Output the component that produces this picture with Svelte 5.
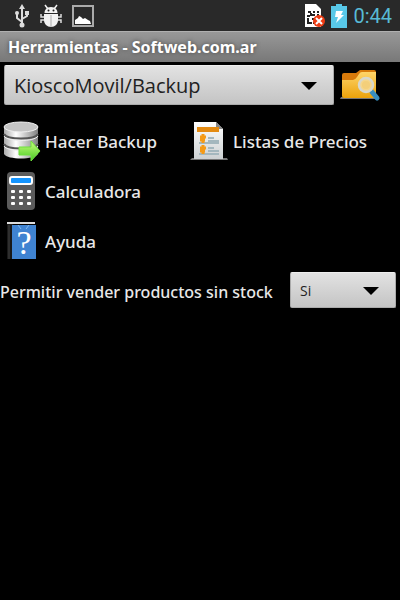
<script lang="ts">
  let folder = $state("KioscoMovil/Backup");
  let allowNoStock = $state("Si");
</script>

<svelte:head>
  <title>Herramientas - Softweb.com.ar</title>
</svelte:head>

<div class="screen">
  <div class="status-bar">
    <div class="status-group left">
      <svg width="16" height="24" viewBox="0 0 16 24" fill="none" stroke="#ddd" stroke-width="2">
        <path d="M8 4v17M8 18L3 14V9M8 15l5-3V9" />
        <path d="M8 0l3 5H5z" fill="#ddd" stroke="none" />
        <circle cx="8" cy="21" r="2.5" fill="#ddd" stroke="none" />
        <circle cx="3" cy="9" r="2" fill="#ddd" stroke="none" />
        <path d="M11 7h4v4h-4z" fill="#ddd" stroke="none" />
      </svg>
      <svg width="22" height="24" viewBox="0 0 22 24" fill="#f2f2f2">
        <path d="M5 1l3 4M17 1l-3 4" stroke="#f2f2f2" stroke-width="1.5" />
        <path d="M4.500 9c0-3 2-6 6.500-6s6.500 3 6.500 6z" />
        <path d="M4 10h14v6c0 4-3 7-7 7s-7-3-7-7z" />
        <path d="M4 13H1v-3M18 13h3v-3M4 16H1v3M18 16h3v3" fill="none" stroke="#ddd" stroke-width="1.5" />
        <path d="M11 11v12" stroke="#aaa" stroke-width="1" />
        <circle cx="8.500" cy="6.500" r="1" fill="#222" />
        <circle cx="13.500" cy="6.500" r="1" fill="#222" />
      </svg>
      <svg width="22" height="24" viewBox="0 0 22 24">
        <rect x="1" y="2" width="20" height="20" fill="#292929" stroke="#aaa" stroke-width="2" />
        <path d="M3 20v-4l3-2 1-2 2 1 2 2 2-1 3 2 2 1 1 3z" fill="#fff" />
      </svg>
    </div>
    <div class="status-group right">
      <svg width="20" height="24" viewBox="0 0 20 24">
        <path d="M0 0h11l5 5v18H0z" fill="#fff" />
        <path d="M3 8h3M8 8h2M12 8h2M2 12h3M7 11h3M12 11h2M6 9v3M3 14v5h4M7 15h2M8 19h2" fill="none" stroke="#222" stroke-width="2" />
        <circle cx="14" cy="17" r="6" fill="#ee3c13" />
        <path d="M11 14l6 6M17 14l-6 6" stroke="#fff" stroke-width="2" />
      </svg>
      <svg width="16" height="24" viewBox="0 0 16 24">
        <path d="M5 0h6v2h5v22H0V2h5z" fill="#58c8e8" />
        <path d="M5 7h7l-2 4h3L5 19l2-6H4z" fill="#fff" />
      </svg>
      <span class="clock">0:44</span>
    </div>
  </div>

  <h1>Herramientas - Softweb.com.ar</h1>

  <main>
    <div class="folder-row">
      <div class="spinner wide">
        <select aria-label="Carpeta" bind:value={folder}>
          <option>KioscoMovil/Backup</option>
        </select>
      </div>
      <button class="browse" aria-label="Buscar carpeta">
        <svg width="40" height="32" viewBox="0 0 40 32">
          <defs>
            <linearGradient id="folder" x2="0" y2="1">
              <stop stop-color="#ffd56a" />
              <stop offset="1" stop-color="#eba20b" />
            </linearGradient>
          </defs>
          <path d="M1 28h34l2 2H0z" fill="#777" />
          <path d="M2 6q0-2 2-2h12l4-3h14q2 0 2 2v20H2z" fill="#d77a0b" />
          <path d="M2 11h11q2 0 4-3l2-3q1-2 3-2h14v25q0 1-2 1H4q-2 0-2-2z" fill="url(#folder)" />
          <path d="M32 23l5 6" stroke="#398fc0" stroke-width="5" stroke-linecap="round" />
          <circle cx="26" cy="16" r="7" fill="#f5d68b" stroke="#d8d8cc" stroke-width="2.500" />
          <circle cx="26" cy="16" r="4" fill="#f3cf7a" />
        </svg>
      </button>
    </div>

    <div class="tools">
      <button class="tool">
        <svg width="38" height="40" viewBox="0 0 38 40">
          <defs>
            <linearGradient id="metal">
              <stop stop-color="#aaa" />
              <stop offset=".35" stop-color="#fff" />
              <stop offset="1" stop-color="#808080" />
            </linearGradient>
            <linearGradient id="arrow" x2="0" y2="1">
              <stop stop-color="#caff7c" />
              <stop offset="1" stop-color="#45c922" />
            </linearGradient>
          </defs>
          <path d="M0 6v27c3 6 31 6 34 0V6z" fill="url(#metal)" />
          <path d="M0 13c3 6 31 6 34 0M0 23c3 6 31 6 34 0" fill="none" stroke="#555" stroke-width="2" />
          <path d="M0 15c3 6 31 6 34 0M0 25c3 6 31 6 34 0" fill="none" stroke="#eee" stroke-width="1" />
          <ellipse cx="17" cy="6" rx="17" ry="5" fill="#c5c5c5" stroke="#eee" />
          <path d="M15 26h12v-6l9 10-9 10v-6H15z" fill="url(#arrow)" stroke="#6fe03c" />
        </svg>
        Hacer Backup
      </button>
      <button class="tool">
        <svg width="38" height="40" viewBox="0 0 38 40">
          <defs>
            <linearGradient id="paper" x2="0" y2="1">
              <stop stop-color="#fff" />
              <stop offset="1" stop-color="#ccd0d2" />
            </linearGradient>
          </defs>
          <path d="M0 37h35l1 2H-2z" fill="#777" />
          <path d="M2 1h22l7 7v30H2z" fill="url(#paper)" />
          <path d="M24 1l7 7h-7z" fill="#888" />
          <rect x="5" y="6" width="22" height="5" fill="#e48b12" />
          <path d="M16 17h6M16 20h11M7 22h20M16 27h6M16 30h11M7 33h20" stroke="#a4b7be" stroke-width="2" />
          <path d="M11 13v9M8 16h6M8 19h5M11 24v9M8 27h6M8 30h5" stroke="#f59a16" stroke-width="3" />
        </svg>
        Listas de Precios
      </button>
      <button class="tool">
        <svg width="38" height="40" viewBox="0 0 38 40">
          <rect x="3" y="1" width="28" height="38" rx="4" fill="#5b5b5b" />
          <rect x="6" y="6" width="22" height="7" rx="2" fill="#1595ff" stroke="#fff" stroke-width="2" />
          {#each [19, 25, 31] as y}
            {#each [7, 15, 23] as x}
              <rect {x} {y} width="4" height="3" rx="1" fill="#fff" />
            {/each}
          {/each}
        </svg>
        Calculadora
      </button>
      <button class="tool">
        <svg width="38" height="40" viewBox="0 0 38 40">
          <path d="M3 3h6v35H3z" fill="#191919" />
          <path d="M5 4v34" stroke="#444" />
          <path d="M8 4h24v34H8z" fill="#3f83d1" />
          <path d="M3 1h28v2H3z" fill="#ddd" />
          <path d="M14 4l3 4M25 4l-3 4" stroke="#83b8ed" stroke-width="1" />
          <text x="20" y="33" text-anchor="middle" fill="#fff" class="book-mark">?</text>
        </svg>
        Ayuda
      </button>
    </div>

    <div class="stock-row">
      <label for="stock">Permitir vender productos sin stock</label>
      <div class="spinner small">
        <select id="stock" bind:value={allowNoStock}>
          <option>Si</option>
          <option>No</option>
        </select>
      </div>
    </div>
  </main>
</div>

<style>
  :global(body) {
    background: #000;
  }

  .screen {
    min-height: 100vh;
    background: #000;
    color: #e8e8e8;
    font-family: "Noto Sans", "Open Sans", sans-serif;
    font-size: 17px;
    font-weight: 500;
  }

  svg {
    display: block;
    flex-shrink: 0;
    overflow: visible;
  }

  .status-bar {
    display: flex;
    justify-content: space-between;
    align-items: center;
    height: 31px;
    padding: 0 8px 0 14px;
    background: #292929;
    box-sizing: border-box;
  }

  .status-group {
    display: flex;
    align-items: center;
  }

  .left {
    gap: 10px;
  }

  .right {
    gap: 6px;
  }

  .clock {
    color: #58bad5;
    font-family: Roboto, sans-serif;
    font-size: 20px;
    font-weight: 400;
    line-height: 24px;
  }

  h1 {
    margin: 0;
    padding: 0 8px;
    height: 31px;
    box-sizing: border-box;
    border-top: 1px solid #b0b0b0;
    background: linear-gradient(#989898, #787878);
    color: #fff;
    font-size: 16px;
    line-height: 30px;
    font-weight: 700;
    text-shadow: 0 0 4px #444;
  }

  main {
    padding-top: 3px;
  }

  .folder-row {
    display: flex;
    align-items: center;
    gap: 6px;
    padding: 0 20px 0 4px;
  }

  .spinner {
    position: relative;
  }

  .spinner::after {
    content: "";
    position: absolute;
    top: 50%;
    right: 17px;
    margin-top: -3px;
    border: 8px solid transparent;
    border-top-color: #000;
    border-bottom: 0;
    pointer-events: none;
  }

  select {
    appearance: none;
    width: 100%;
    height: 100%;
    padding: 0 9px;
    border: 1px solid #aaa;
    border-top-color: #eee;
    border-radius: 2px;
    background: linear-gradient(#e2e2e2, #c4c4c4);
    color: #222;
    font-family: "Open Sans", sans-serif;
    font-size: inherit;
    font-weight: inherit;
  }

  .wide {
    flex: 1;
    height: 40px;
    font-size: 20px;
    font-weight: 400;
  }

  .small {
    width: 106px;
    height: 36px;
    font-size: 14px;
    font-weight: 400;
  }

  button {
    border: 0;
    padding: 0;
    background: none;
    color: inherit;
    font: inherit;
    text-align: left;
  }

  .tools {
    display: grid;
    grid-template-columns: 188px 1fr;
    grid-auto-rows: 50px;
    margin-top: 11px;
    padding-left: 4px;
  }

  .tool {
    display: flex;
    align-items: center;
    gap: 3px;
    white-space: nowrap;
  }

  .tool:nth-child(n + 3) {
    grid-column: 1 / -1;
  }

  .book-mark {
    font-family: "Liberation Serif", serif;
    font-size: 34px;
  }

  .stock-row {
    display: flex;
    justify-content: space-between;
    align-items: center;
    margin-top: 6px;
    padding-right: 4px;
  }

  label {
    padding-top: 4px;
    font-size: 16px;
    white-space: nowrap;
  }
</style>
